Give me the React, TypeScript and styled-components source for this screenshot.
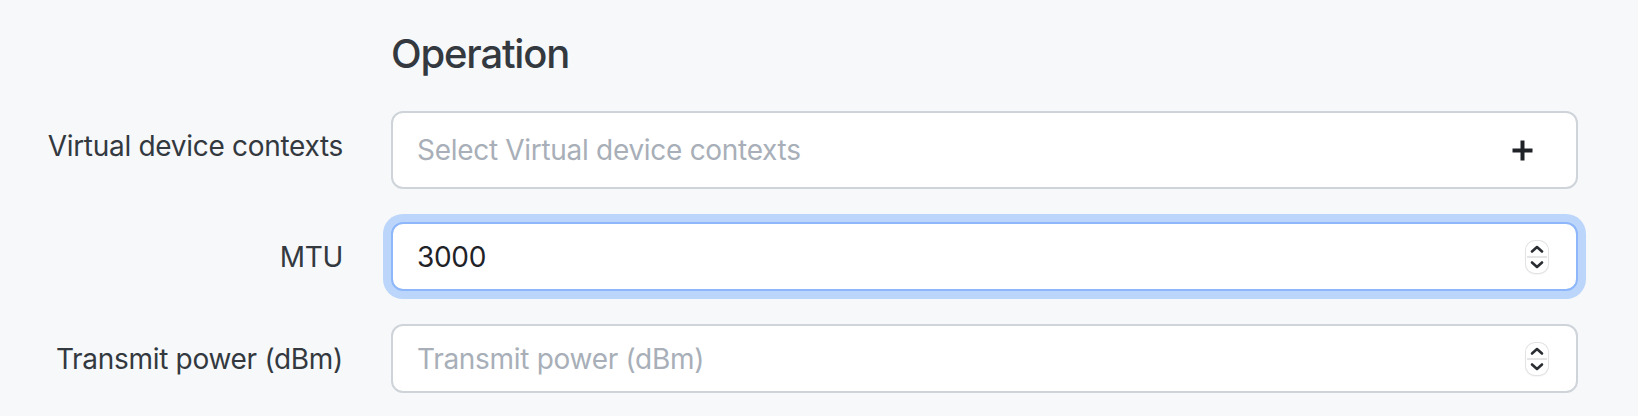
import * as React from 'react';
import styled, { createGlobalStyle } from 'styled-components';

const colors = {
  page: '#f6f8fa',
  text: '#33393f',
  input: '#1f2328',
  placeholder: '#a8afb8',
  border: '#cfd4da',
  focusBorder: '#8db6fb',
  focusRing: 'rgba(13, 110, 253, 0.25)',
  white: '#ffffff'
};

const GlobalStyle = createGlobalStyle`
  html, body {
    margin: 0;
    padding: 0;
    background: ${colors.page};
    font-family: Inter, "Noto Sans", "Liberation Sans", sans-serif;
    color: ${colors.text};
  }
`;

const PlusIcon = () => (
  <svg width="21" height="21" viewBox="0 0 21 21" aria-hidden="true">
    <path d="M10.5 0.5v20M0.5 10.5h20" stroke="#1f2328" strokeWidth="4" fill="none" />
  </svg>
);

const Spinner = () => (
  <SpinnerBox>
    <svg width="22" height="32" viewBox="0 0 22 32" aria-hidden="true">
      <path
        d="M6 10.5l5-4.5 5 4.5M6 21.5l5 4.5 5-4.5"
        stroke="#2a2e33"
        strokeWidth="2.6"
        strokeLinecap="round"
        strokeLinejoin="round"
        fill="none"
      />
      <path d="M1 16h20" stroke="#dcdcdc" strokeWidth="1.5" />
    </svg>
  </SpinnerBox>
);

interface FieldProps {
  label: string;
  children: React.ReactNode;
}

const Field: React.FC<FieldProps> = ({ label, children }) => (
  <Row>
    <Label>{label}</Label>
    <Control>{children}</Control>
  </Row>
);

const App: React.FC = () => (
  <>
    <GlobalStyle />
    <Page>
      <Fieldset>
        <Heading>Operation</Heading>
        <Field label="Virtual device contexts">
          <SelectBox>
            <Placeholder>Select Virtual device contexts</Placeholder>
            <PlusIcon />
          </SelectBox>
        </Field>
        <Field label="MTU">
          <NumberBox focused>
            <Value>3000</Value>
            <Spinner />
          </NumberBox>
        </Field>
        <Field label="Transmit power (dBm)">
          <NumberBox>
            <Placeholder>Transmit power (dBm)</Placeholder>
            <Spinner />
          </NumberBox>
        </Field>
      </Fieldset>
    </Page>
  </>
);

export default App;

const Page = styled.div`
  width: 1638px;
  height: 416px;
  box-sizing: border-box;
  padding-top: 30px;
  overflow: hidden;
`;

const Fieldset = styled.div`
  display: grid;
  grid-template-columns: 343px 1187px;
  column-gap: 48px;
`;

const Heading = styled.h2`
  grid-column: 2;
  margin: 0 0 33px;
  font-size: 40px;
  line-height: 48px;
  font-weight: 500;
  letter-spacing: -1.2px;
  color: ${colors.text};
`;

const Row = styled.div`
  display: contents;
`;

const Label = styled.label`
  grid-column: 1;
  padding-top: 14px;
  font-size: 28px;
  line-height: 42px;
  letter-spacing: -0.3px;
  text-align: right;
  white-space: nowrap;
  color: ${colors.text};
`;

const Control = styled.div`
  grid-column: 2;
  margin-bottom: 33px;
`;

const Box = styled.div`
  display: flex;
  align-items: center;
  justify-content: space-between;
  box-sizing: border-box;
  background: ${colors.white};
  border: 2px solid ${colors.border};
  border-radius: 12px;
  font-size: 28px;
  line-height: 42px;
  letter-spacing: -0.3px;
`;

const SelectBox = styled(Box)`
  height: 78px;
  padding: 0 43px 0 24px;
`;

const NumberBox = styled(Box)<{ focused?: boolean }>`
  height: 69px;
  padding: 0 28px 0 24px;
  border-color: ${p => (p.focused ? colors.focusBorder : colors.border)};
  box-shadow: ${p => (p.focused ? `0 0 0 8px ${colors.focusRing}` : 'none')};
`;

const Placeholder = styled.span`
  color: ${colors.placeholder};
`;

const Value = styled.span`
  color: ${colors.input};
`;

const SpinnerBox = styled.span`
  display: flex;
  width: 22px;
  height: 32px;
  border-radius: 9px;
  background: ${colors.white};
  box-shadow: 0 0 0 1px #e2e2e2, 0 1px 2px rgba(0, 0, 0, 0.12);
  overflow: hidden;
`;
